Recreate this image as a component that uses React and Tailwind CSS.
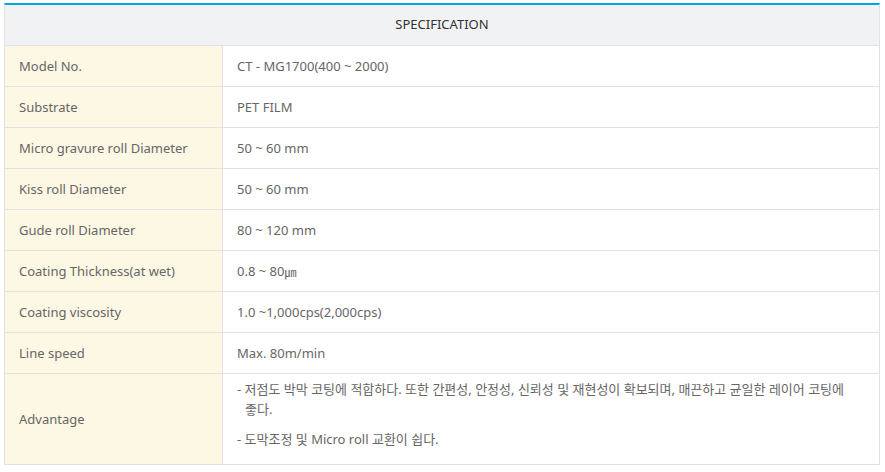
const rows = [
  ['Model No.', 'CT - MG1700(400 ~ 2000)'],
  ['Substrate', 'PET FILM'],
  ['Micro gravure roll Diameter', '50 ~ 60 mm'],
  ['Kiss roll Diameter', '50 ~ 60 mm'],
  ['Gude roll Diameter', '80 ~ 120 mm'],
  ['Coating Thickness(at wet)', <>0.8 ~ 80<span className="font-['Noto_Sans_CJK_KR'] text-[12px]">㎛</span></>],
  ['Coating viscosity', '1.0 ~1,000cps(2,000cps)'],
  ['Line speed', 'Max. 80m/min'],
];

const Row = ({ label, children, tall }) => (
  <div className="flex border-b border-[#e2e2e2]">
    <div className="w-[218px] shrink-0 bg-[#fdf8e4] border-r border-[#e2e2e2] flex items-center pl-[14px] pt-[1px]">
      {label}
    </div>
    <div className={`flex-1 pl-[14px] pr-[14px] ${tall ? 'py-[5px]' : 'h-[40px] flex items-center pt-[1px]'}`}>
      {children}
    </div>
  </div>
);

export default function App() {
  return (
    <div
      className="w-[885px] h-[472px] bg-white pt-[3px] pl-[4px] text-[13px] text-[#666]"
      style={{ fontFamily: '"Noto Sans", "Noto Sans CJK KR", sans-serif' }}
    >
      <div className="w-[876px] border-t-2 border-[#00a9dc] border-x border-x-[#e2e2e2]">
        {/* header */}
        <div className="h-[41px] bg-[#f1f2f4] border-b border-[#e2e2e2] flex items-center justify-center text-[#333]">
          SPECIFICATION
        </div>

        {rows.map(([label, value]) => (
          <Row key={label} label={label}>{value}</Row>
        ))}

        <Row label="Advantage" tall>
          <p className="pl-[8px] -indent-[8px] leading-[20px] mb-[10px] break-keep">
            - 저점도 박막 코팅에 적합하다. 또한 간편성, 안정성, 신뢰성 및 재현성이 확보되며, 매끈하고 균일한 레이어 코팅에 좋다.
          </p>
          <p className="pl-[8px] -indent-[8px] leading-[20px] mb-[10px] break-keep">
            - 도막조정 및 Micro roll 교환이 쉽다.
          </p>
        </Row>
      </div>
    </div>
  );
}
